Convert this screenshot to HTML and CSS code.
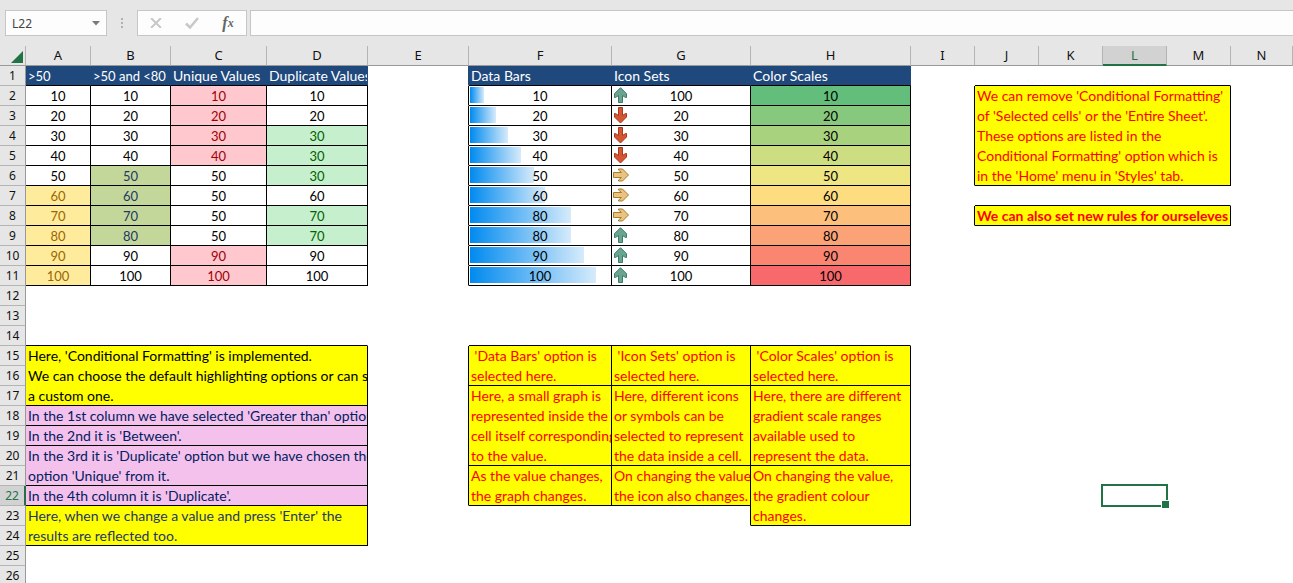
FILE: index.html
```html
<!DOCTYPE html>
<html lang="en">
<head>
<meta charset="utf-8">
<title>Conditional Formatting</title>
<link rel="stylesheet" href="styles.css">
</head>
<body>
<svg class="defs" aria-hidden="true">
  <symbol id="up" viewBox="0 0 16 16"><path d="M7.500 .7 13.500 6.700V10.500H12.500L9.500 8.500V15.500H5.500V8.500L2.500 10.500H1.500V6.700Z"/></symbol>
  <symbol id="down" viewBox="0 0 16 16"><path d="M7.500 16 1.500 10V6.500H2.500L5.500 8.500V.5H9.500V8.500L12.500 6.500H13.500V10Z"/></symbol>
  <symbol id="side" viewBox="0 0 16 16"><path d="M15.500 8 9.500 14H5.500V13L8.500 10.500H.5V5.500H8.500L5.500 3V2H9.500Z"/></symbol>
</svg>
<header class="formula-bar">
  <div class="name-box">
    <input type="text" value="L22" aria-label="Name box">
    <button type="button" aria-label="Show names"><svg width="8" height="5" viewBox="0 0 8 5"><path d="M0 0H8L4 4.500Z" fill="#7a7a7a"/></svg></button>
  </div>
  <svg class="grip" width="4" height="12" viewBox="0 0 4 12"><path d="M1 1h2v2H1zM1 5h2v2H1zM1 9h2v2H1z" fill="#b0b0b0"/></svg>
  <div class="actions">
    <button type="button" aria-label="Cancel"><svg width="12" height="10" viewBox="0 0 12 10"><path d="M1 0 11 10M11 0 1 10" stroke="#c8c8c8" stroke-width="2" fill="none"/></svg></button>
    <button type="button" aria-label="Enter"><svg width="14" height="12" viewBox="0 0 14 12"><path d="M1 6.500 5 10.500 13 1" stroke="#c8c8c8" stroke-width="2.500" fill="none"/></svg></button>
    <button type="button" class="fx" aria-label="Insert function">f<small>x</small></button>
  </div>
  <input class="formula" type="text" aria-label="Formula">
</header>
<main class="sheet">
<table>
<colgroup><col class="w-row"><col class="w-a"><col class="w-b"><col class="w-c"><col class="w-d"><col class="w-d"><col class="w-f"><col class="w-g"><col class="w-h"><col class="w-s"><col class="w-s"><col class="w-s"><col class="w-s"><col class="w-s"><col></colgroup>
<thead>
<tr><th class="corner"><svg width="12" height="12" viewBox="0 0 12 12"><path d="M12 0V12H0Z" fill="#217346"/></svg></th><th>A</th><th>B</th><th>C</th><th>D</th><th>E</th><th>F</th><th>G</th><th>H</th><th>I</th><th>J</th><th>K</th><th class="active">L</th><th>M</th><th>N</th></tr>
</thead>
<tbody>
<tr><th>1</th><td class="title digits">&gt;50</td><td class="title digits">&gt;50 and &lt;80</td><td class="title">Unique Values</td><td class="title">Duplicate Values</td><td class="edge-title"></td><td class="title">Data Bars</td><td class="title">Icon Sets</td><td class="title">Color Scales</td><td></td><td class="bottom" colspan="4"></td></tr>
<tr><th>2</th><td class="num">10</td><td class="num">10</td><td class="num red">10</td><td class="num">10</td><td class="right"></td><td class="num"><i style="width:10%"></i><b>10</b></td><td class="num"><svg class="icon up"><use href="#up"/></svg>100</td><td class="num" style="background:#63be7b">10</td><td class="right" rowspan="5"></td><td class="note red-text" colspan="4" rowspan="5"><p>We can remove 'Conditional Formatting'<br>of 'Selected cells' or the 'Entire Sheet'.<br>These options are listed in the<br>Conditional Formatting' option which is<br>in the 'Home' menu in 'Styles' tab.</p></td></tr>
<tr><th>3</th><td class="num">20</td><td class="num">20</td><td class="num red">20</td><td class="num">20</td><td class="right"></td><td class="num"><i style="width:18%"></i><b>20</b></td><td class="num"><svg class="icon down"><use href="#down"/></svg>20</td><td class="num" style="background:#86c97e">20</td></tr>
<tr><th>4</th><td class="num">30</td><td class="num">30</td><td class="num red">30</td><td class="num green">30</td><td class="right"></td><td class="num"><i style="width:27%"></i><b>30</b></td><td class="num"><svg class="icon down"><use href="#down"/></svg>30</td><td class="num" style="background:#a9d27f">30</td></tr>
<tr><th>5</th><td class="num">40</td><td class="num">40</td><td class="num red">40</td><td class="num green">30</td><td class="right"></td><td class="num"><i style="width:36%"></i><b>40</b></td><td class="num"><svg class="icon down"><use href="#down"/></svg>40</td><td class="num" style="background:#ccdd82">40</td></tr>
<tr><th>6</th><td class="num">50</td><td class="num olive">50</td><td class="num">50</td><td class="num green">30</td><td class="right"></td><td class="num"><i style="width:45%"></i><b>50</b></td><td class="num"><svg class="icon side"><use href="#side"/></svg>50</td><td class="num" style="background:#eee683">50</td></tr>
<tr><th>7</th><td class="num amber">60</td><td class="num olive">60</td><td class="num">50</td><td class="num">60</td><td class="right"></td><td class="num"><i style="width:53%"></i><b>60</b></td><td class="num"><svg class="icon side"><use href="#side"/></svg>60</td><td class="num" style="background:#fedd81">60</td><td></td><td class="bottom" colspan="4"></td></tr>
<tr><th>8</th><td class="num amber">70</td><td class="num olive">70</td><td class="num">50</td><td class="num green">70</td><td class="right"></td><td class="num"><i style="width:71%"></i><b>80</b></td><td class="num"><svg class="icon side"><use href="#side"/></svg>70</td><td class="num" style="background:#fdc07c">70</td><td class="right"></td><td class="note red-text strong" colspan="4"><p>We can also set new rules for ourseleves</p></td></tr>
<tr><th>9</th><td class="num amber">80</td><td class="num olive">80</td><td class="num">50</td><td class="num green">70</td><td class="right"></td><td class="num"><i style="width:71%"></i><b>80</b></td><td class="num"><svg class="icon up"><use href="#up"/></svg>80</td><td class="num" style="background:#fba376">80</td></tr>
<tr><th>10</th><td class="num amber">90</td><td class="num">90</td><td class="num red">90</td><td class="num">90</td><td class="right"></td><td class="num"><i style="width:80%"></i><b>90</b></td><td class="num"><svg class="icon up"><use href="#up"/></svg>90</td><td class="num" style="background:#fa8671">90</td></tr>
<tr><th>11</th><td class="num amber">100</td><td class="num">100</td><td class="num red">100</td><td class="num">100</td><td class="right"></td><td class="num"><i style="width:89%"></i><b>100</b></td><td class="num"><svg class="icon up"><use href="#up"/></svg>100</td><td class="num" style="background:#f8696b">100</td></tr>
<tr><th>12</th></tr>
<tr><th>13</th></tr>
<tr><th>14</th><td class="bottom" colspan="4"></td><td></td><td class="bottom" colspan="3"></td></tr>
<tr><th>15</th><td class="note" colspan="4" rowspan="3"><p>Here, 'Conditional Formatting' is implemented.<br>We can choose the default highlighting options or can set<br>a custom one.</p></td><td class="right" rowspan="8"></td><td class="note red-text" rowspan="2"><p>&nbsp;'Data Bars' option is<br>selected here.</p></td><td class="note red-text" rowspan="2"><p>&nbsp;'Icon Sets' option is<br>selected here.</p></td><td class="note red-text" rowspan="2"><p>&nbsp;'Color Scales' option is<br>selected here.</p></td></tr>
<tr><th>16</th></tr>
<tr><th>17</th><td class="note red-text" rowspan="4"><p>Here, a small graph is<br>represented inside the<br>cell itself corresponding<br>to the value.</p></td><td class="note red-text" rowspan="4"><p>Here, different icons<br>or symbols can be<br>selected to represent<br>the data inside a cell.</p></td><td class="note red-text" rowspan="4"><p>Here, there are different<br>gradient scale ranges<br>available used to<br>represent the data.</p></td></tr>
<tr><th>18</th><td class="note pink" colspan="4"><p>In the 1st column we have selected 'Greater than' option.</p></td></tr>
<tr><th>19</th><td class="note pink" colspan="4"><p>In the 2nd it is 'Between'.</p></td></tr>
<tr><th>20</th><td class="note pink" colspan="4" rowspan="2"><p>In the 3rd it is 'Duplicate' option but we have chosen the<br>option 'Unique' from it.</p></td></tr>
<tr><th>21</th><td class="note red-text" rowspan="2"><p>As the value changes,<br>the graph changes.</p></td><td class="note red-text" rowspan="2"><p>On changing the value,<br>the icon also changes.</p></td><td class="note red-text" rowspan="3"><p>On changing the value,<br>the gradient colour<br>changes.</p></td></tr>
<tr><th class="active">22</th><td class="note pink" colspan="4"><p>In the 4th column it is 'Duplicate'.</p></td><td></td><td></td><td></td><td class="selected"><div class="frame"></div></td></tr>
<tr><th>23</th><td class="note navy" colspan="4" rowspan="2"><p>Here, when we change a value and press 'Enter' the<br>results are reflected too.</p></td><td></td><td></td><td class="right"></td></tr>
<tr><th>24</th></tr>
<tr><th>25</th></tr>
<tr><th>26</th></tr>
</tbody>
</table>
</main>
</body>
</html>
```

FILE: styles.css
```css
* { box-sizing: border-box; }
html, body { height: 100%; }
body {
  margin: 0;
  display: flex;
  flex-direction: column;
  overflow: hidden;
  background: #fff;
  color: #000;
  font: 14px/20px Lato, "Noto Sans", sans-serif;
}
.defs { position: absolute; width: 0; height: 0; }
button, input { margin: 0; padding: 0; border: 0; background: none; font: inherit; color: inherit; outline: 0; }
button { display: flex; align-items: center; justify-content: center; }

.formula-bar { flex: none; display: flex; align-items: center; padding: 10px 0 10px 5px; background: #e6e6e6; }
.name-box, .actions, .formula { height: 26px; border: 1px solid #c6c6c6; background: #fdfdfd; }
.name-box { display: flex; width: 102px; }
.name-box input { flex: 1; min-width: 0; padding-left: 6px; font: 12px "Noto Sans", sans-serif; color: #444; }
.name-box button { width: 20px; }
.grip { margin: 0 13px; }
.actions { display: flex; width: 110px; margin-right: 3px; }
.actions button { flex: 1; }
.fx { font: italic bold 16px "Liberation Serif", serif; color: #666; }
.fx small { font-size: 12px; }
.formula { flex: 1; border-right: 0; padding: 0 6px; }

.sheet { flex: 1; min-height: 0; overflow: hidden; }
table { width: 100%; min-width: 1280px; table-layout: fixed; border-collapse: separate; border-spacing: 0; }
.w-row { width: 26px; }
.w-a { width: 65px; }
.w-b { width: 80px; }
.w-c { width: 96px; }
.w-d { width: 101px; }
.w-f { width: 143px; }
.w-g { width: 139px; }
.w-h { width: 160px; }
.w-s { width: 64px; }

tr { height: 20px; }
th, td { height: 20px; padding: 0; border: 0 solid transparent; border-width: 0 1px 1px 0; overflow: hidden; white-space: nowrap; line-height: 18px; }
th { background: #e6e6e6; font: 13px/19px "Noto Sans", sans-serif; color: #111; text-align: center; }
thead th { border-bottom-color: #999; border-right-color: #b4b4b4; }
tbody th { padding-top: 1px; border-right-color: #999; border-bottom-color: #b4b4b4; font-size: 12px; line-height: 18px; }
.corner svg { display: block; margin: 3px 2px 0 auto; }
th.active { background: #d2d2d2; color: #217346; }
thead .active { border-bottom: 2px solid #217346; line-height: 18px; }
tbody .active { border-right: 2px solid #217346; }

.right { border-right-color: #000; }
.bottom { border-bottom-color: #000; }
.title { padding: 1px 0 0 2px; background: #1f497d; border-color: #1f497d; border-bottom-color: #000; color: #fff; }
.digits { font-size: 13px; }
.edge-title { border-right-color: #1f497d; }
.num { position: relative; padding-top: 1px; border-color: #000; font-size: 13px; text-align: center; }
.num b { position: relative; font-weight: 400; }
.num i { position: absolute; left: 1px; top: 1px; bottom: 2px; background: linear-gradient(90deg, #008aef, #d6ebfb); }
.red { background: #ffc7ce; color: #9c0006; }
.green { background: #c6efce; color: #006100; }
.amber { background: #ffeb9c; color: #9c6500; }
.olive { background: #c4d79b; color: #1f3864; }

.icon { position: absolute; left: 1px; top: 1px; width: 16px; height: 16px; }
.up { fill: #68a490; stroke: #3b7c66; }
.down { fill: #d65532; stroke: #a63a1e; }
.side { fill: #eac282; stroke: #a67c2a; }

.note { padding-left: 2px; background: #ff0; border-color: #000; vertical-align: top; }
.note p { margin: 0 0 -1px; line-height: 20px; }
.red-text { color: #f00; }
.strong { font-weight: 700; }
.pink { background: #f4c0ec; color: #002060; }
.navy { color: #1f3864; }

.selected { position: relative; overflow: visible; }
.frame { position: absolute; inset: -2px; border: 2px solid #217346; }
.frame::after { content: ""; position: absolute; right: -4px; bottom: -4px; width: 7px; height: 7px; border: 1px solid #fff; background: #217346; }
```
